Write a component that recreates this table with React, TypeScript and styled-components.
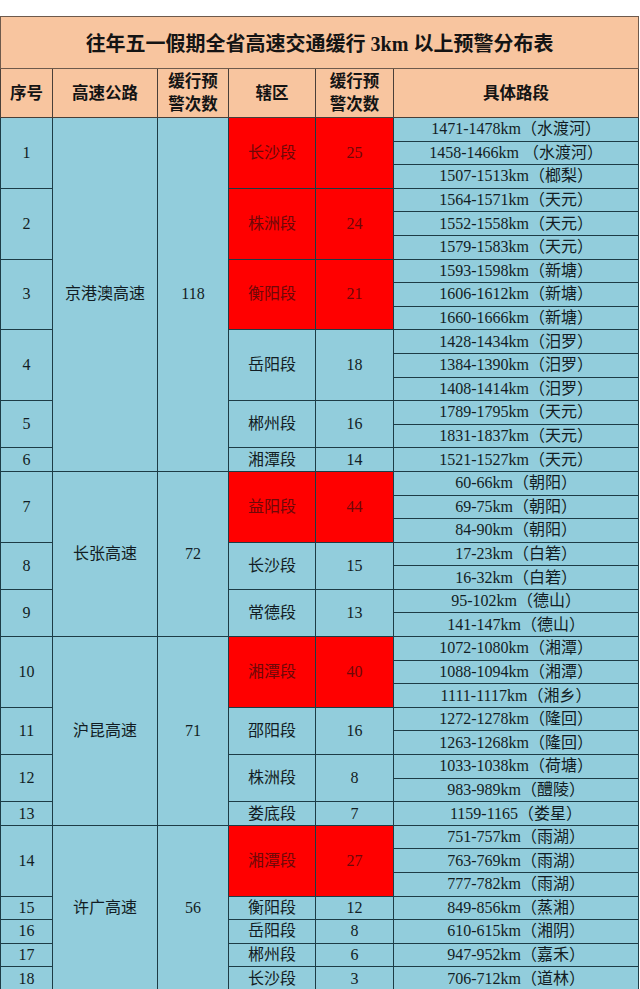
import styled, { createGlobalStyle } from "styled-components";

const GlobalStyle = createGlobalStyle`
    body {
        margin: 0;
        background: #ffffff;
        font-family: "Liberation Serif", "Noto Sans CJK SC", serif;
    }
`

type District = {
    no: number;
    name: string;
    count: number;
    hot?: boolean;
    roads: string[];
}

type Highway = {
    name: string;
    total: number;
    districts: District[];
}

const highways: Highway[] = [
    {
        name: "京港澳高速",
        total: 118,
        districts: [
            { no: 1, name: "长沙段", count: 25, hot: true, roads: ["1471-1478km（水渡河）", "1458-1466km （水渡河）", "1507-1513km（榔梨）"] },
            { no: 2, name: "株洲段", count: 24, hot: true, roads: ["1564-1571km（天元）", "1552-1558km（天元）", "1579-1583km（天元）"] },
            { no: 3, name: "衡阳段", count: 21, hot: true, roads: ["1593-1598km（新塘）", "1606-1612km（新塘）", "1660-1666km（新塘）"] },
            { no: 4, name: "岳阳段", count: 18, roads: ["1428-1434km（汨罗）", "1384-1390km（汨罗）", "1408-1414km（汨罗）"] },
            { no: 5, name: "郴州段", count: 16, roads: ["1789-1795km（天元）", "1831-1837km（天元）"] },
            { no: 6, name: "湘潭段", count: 14, roads: ["1521-1527km（天元）"] },
        ],
    },
    {
        name: "长张高速",
        total: 72,
        districts: [
            { no: 7, name: "益阳段", count: 44, hot: true, roads: ["60-66km（朝阳）", "69-75km（朝阳）", "84-90km（朝阳）"] },
            { no: 8, name: "长沙段", count: 15, roads: ["17-23km（白箬）", "16-32km（白箬）"] },
            { no: 9, name: "常德段", count: 13, roads: ["95-102km（德山）", "141-147km（德山）"] },
        ],
    },
    {
        name: "沪昆高速",
        total: 71,
        districts: [
            { no: 10, name: "湘潭段", count: 40, hot: true, roads: ["1072-1080km（湘潭）", "1088-1094km（湘潭）", "1111-1117km（湘乡）"] },
            { no: 11, name: "邵阳段", count: 16, roads: ["1272-1278km（隆回）", "1263-1268km（隆回）"] },
            { no: 12, name: "株洲段", count: 8, roads: ["1033-1038km（荷塘）", "983-989km（醴陵）"] },
            { no: 13, name: "娄底段", count: 7, roads: ["1159-1165（娄星）"] },
        ],
    },
    {
        name: "许广高速",
        total: 56,
        districts: [
            { no: 14, name: "湘潭段", count: 27, hot: true, roads: ["751-757km（雨湖）", "763-769km（雨湖）", "777-782km（雨湖）"] },
            { no: 15, name: "衡阳段", count: 12, roads: ["849-856km（蒸湘）"] },
            { no: 16, name: "岳阳段", count: 8, roads: ["610-615km（湘阴）"] },
            { no: 17, name: "郴州段", count: 6, roads: ["947-952km（嘉禾）"] },
            { no: 18, name: "长沙段", count: 3, roads: ["706-712km（道林）"] },
        ],
    },
]

const Page = styled.div`
    padding-top: 16px;
    width: 640px;
`
const Sheet = styled.table`
    width: 638px;
    border-collapse: collapse;
    table-layout: fixed;
    font-family: "Liberation Serif", "Noto Sans CJK SC", serif;
`
const TitleCell = styled.th`
    height: 51px;
    padding: 0;
    background: #f8c59f;
    border: 1px solid #6e5a4c;
    color: #141414;
    font-size: 20px;
    font-weight: 700;
    text-align: center;
    vertical-align: middle;
`
const HeadCell = styled.th`
    height: 48px;
    padding: 0;
    background: #f8c59f;
    border: 1px solid #4a3f38;
    color: #141414;
    font-size: 16.5px;
    font-weight: 700;
    line-height: 23px;
    text-align: center;
    vertical-align: middle;
`
const Row = styled.tr`
    height: 23.6px;
`
const Cell = styled.td<{ $hot?: boolean }>`
    padding: 0;
    background: ${({ $hot }) => ($hot ? "#ff0000" : "#92cddc")};
    border: 1px solid #1d3c46;
    color: ${({ $hot }) => ($hot ? "#6e0808" : "#121d24")};
    font-size: 16px;
    line-height: 20px;
    text-align: center;
    vertical-align: middle;
    white-space: pre;
`

function App() {
    return (
        <Page>
            <GlobalStyle />
            <Sheet>
                <colgroup>
                    <col style={{ width: 52 }} />
                    <col style={{ width: 105 }} />
                    <col style={{ width: 71 }} />
                    <col style={{ width: 87 }} />
                    <col style={{ width: 78 }} />
                    <col style={{ width: 245 }} />
                </colgroup>
                <thead>
                    <tr>
                        <TitleCell colSpan={6}>往年五一假期全省高速交通缓行 3km 以上预警分布表</TitleCell>
                    </tr>
                    <tr>
                        <HeadCell>序号</HeadCell>
                        <HeadCell>高速公路</HeadCell>
                        <HeadCell>缓行预<br />警次数</HeadCell>
                        <HeadCell>辖区</HeadCell>
                        <HeadCell>缓行预<br />警次数</HeadCell>
                        <HeadCell>具体路段</HeadCell>
                    </tr>
                </thead>
                <tbody>
                    {highways.map((hw) => {
                        const span = hw.districts.reduce((n, d) => n + d.roads.length, 0)
                        return hw.districts.map((d, di) =>
                            d.roads.map((road, ri) => (
                                <Row key={`${d.no}-${ri}`}>
                                    {ri === 0 && <Cell rowSpan={d.roads.length}>{d.no}</Cell>}
                                    {di === 0 && ri === 0 && (
                                        <>
                                            <Cell rowSpan={span}>{hw.name}</Cell>
                                            <Cell rowSpan={span}>{hw.total}</Cell>
                                        </>
                                    )}
                                    {ri === 0 && (
                                        <>
                                            <Cell rowSpan={d.roads.length} $hot={d.hot}>{d.name}</Cell>
                                            <Cell rowSpan={d.roads.length} $hot={d.hot}>{d.count}</Cell>
                                        </>
                                    )}
                                    <Cell>{road}</Cell>
                                </Row>
                            ))
                        )
                    })}
                </tbody>
            </Sheet>
        </Page>
    )
}

export default App
